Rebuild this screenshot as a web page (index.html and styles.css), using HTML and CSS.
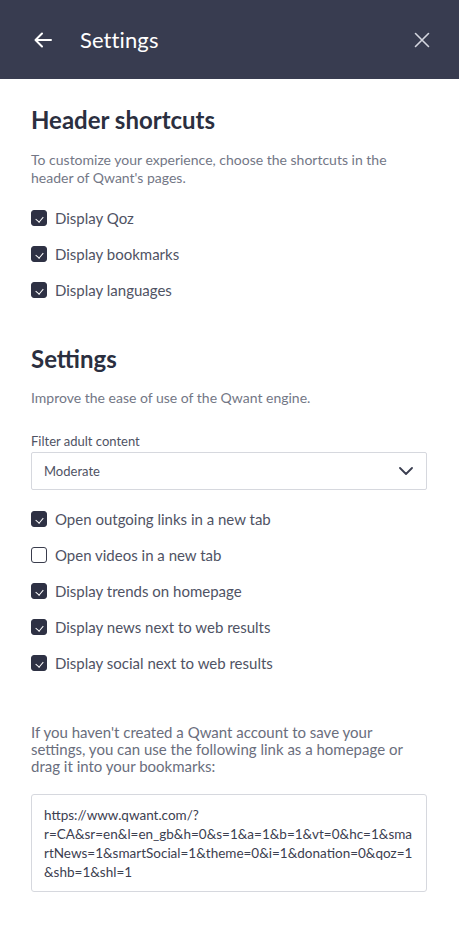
FILE: index.html
```html
<!DOCTYPE html>
<html lang="en">
<head>
<meta charset="utf-8">
<link rel="stylesheet" href="styles.css">
</head>
<body>
<header class="topbar">
  <svg class="back" width="18" height="16" viewBox="0 0 18 16"><path d="M17 8H2M8 1.5L1.5 8 8 14.5" fill="none" stroke="#fff" stroke-width="2" stroke-linecap="round" stroke-linejoin="round"/></svg>
  <h1 class="title">Settings</h1>
  <svg class="close" width="16" height="16" viewBox="0 0 16 16"><path d="M1.5 1.5l13 13M14.5 1.5l-13 13" fill="none" stroke="#d4d6df" stroke-width="1.6" stroke-linecap="round"/></svg>
</header>
<main class="content">
  <section class="group">
    <h2 class="heading">Header shortcuts</h2>
    <p class="desc">To customize your experience, choose the shortcuts in the header of Qwant's pages.</p>
    <ul class="checks">
      <li class="check"><span class="box on"></span>Display Qoz</li>
      <li class="check"><span class="box on"></span>Display bookmarks</li>
      <li class="check"><span class="box on"></span>Display languages</li>
    </ul>
  </section>
  <section class="group second">
    <h2 class="heading">Settings</h2>
    <p class="desc">Improve the ease of use of the Qwant engine.</p>
    <label class="label">Filter adult content</label>
    <div class="select"><span>Moderate</span>
      <svg width="14" height="8" viewBox="0 0 14 8"><path d="M1 1l6 6 6-6" fill="none" stroke="#3a3e50" stroke-width="1.8" stroke-linecap="round" stroke-linejoin="round"/></svg>
    </div>
    <ul class="checks checks2">
      <li class="check"><span class="box on"></span>Open outgoing links in a new tab</li>
      <li class="check"><span class="box"></span>Open videos in a new tab</li>
      <li class="check"><span class="box on"></span>Display trends on homepage</li>
      <li class="check"><span class="box on"></span>Display news next to web results</li>
      <li class="check"><span class="box on"></span>Display social next to web results</li>
    </ul>
    <p class="info">If you haven't created a Qwant account to save your settings, you can use the following link as a homepage or drag it into your bookmarks:</p>
    <div class="link">https://www.qwant.com/?r=CA&amp;sr=en&amp;l=en_gb&amp;h=0&amp;s=1&amp;a=1&amp;b=1&amp;vt=0&amp;hc=1&amp;smartNews=1&amp;smartSocial=1&amp;theme=0&amp;i=1&amp;donation=0&amp;qoz=1&amp;shb=1&amp;shl=1</div>
  </section>
</main>
</body>
</html>
```
FILE: styles.css
```css
* { box-sizing: border-box; }
html, body { margin: 0; padding: 0; background: #fff; }
body { font-family: Lato, "Open Sans", sans-serif; color: #2e3142; }
.topbar {
  height: 79px;
  background: #383c50;
  display: flex;
  align-items: center;
  padding: 0 29px 0 34px;
}
.back { flex: none; }
.title {
  margin: 0 0 0 28px;
  font-size: 22px;
  font-weight: 400;
  color: #fff;
  flex: 1;
  letter-spacing: 0.1px;
}
.close { flex: none; }
.content { padding: 0 32px 0 31px; }
.group { padding-top: 26px; }
.heading {
  margin: 0;
  font-size: 24px;
  font-weight: 700;
  line-height: 30px;
  color: #2b2f40;
}
.desc {
  margin: 16px 0 0;
  font-size: 14px;
  line-height: 18px;
  color: #737786;
}
.second .desc { margin-top: 15px; }
.checks { list-style: none; margin: 23px 0 0; padding: 0; display: flex; flex-direction: column; gap: 20px; }
.check {
  display: flex;
  align-items: center;
  font-size: 15px;
  line-height: 16px;
  color: #4f5364;
}
.box {
  width: 16px; height: 16px;
  border: 1.5px solid #3a3d4d;
  border-radius: 3px;
  margin-right: 8px;
  flex: none;
  position: relative;
}
.box.on { background: #2e3144; border-color: #2e3144; }
.box.on::after {
  content: "";
  position: absolute;
  left: 4.5px; top: 3.5px;
  width: 4px; height: 6px;
  border: solid #fff;
  border-width: 0 1.6px 1.6px 0;
  transform: rotate(40deg);
}
.second { padding-top: 46px; }
.label {
  display: block;
  margin-top: 26px;
  font-size: 13px;
  line-height: 16px;
  color: #4f5364;
}
.select {
  margin-top: 3px;
  height: 38px;
  border: 1px solid #d6d8de;
  border-radius: 2px;
  display: flex;
  align-items: center;
  justify-content: space-between;
  padding: 0 13px 0 12px;
  font-size: 13px;
  color: #4f5364;
}
.checks2 { margin-top: 21px; }
.info {
  margin: 53px 0 0;
  font-size: 15px;
  line-height: 17px;
  color: #6a6e7d;
}
.link {
  margin-top: 19px;
  border: 1px solid #d6d8de;
  border-radius: 3px;
  padding: 11px 12px 9px;
  font-size: 13.5px;
  line-height: 19px;
  color: #3c4050;
  overflow-wrap: break-word;
}
```
